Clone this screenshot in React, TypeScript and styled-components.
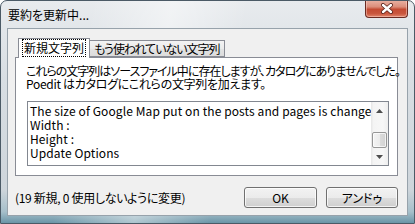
import React from 'react';
import styled, { createGlobalStyle } from 'styled-components';

const GlobalStyle = createGlobalStyle`
    html, body {
        margin: 0;
        padding: 0;
        width: 415px;
        height: 224px;
        overflow: hidden;
        background: #ffffff;
    }
    body {
        font-family: "Noto Sans CJK JP", "Noto Sans", sans-serif;
        font-size: 12px;
        color: #000000;
    }
`;

const FONT = `"Noto Sans CJK JP", "Noto Sans", sans-serif`;

const Window = styled.div`
    box-sizing: border-box;
    width: 415px;
    height: 224px;
    display: flex;
    flex-direction: column;
    border: 1px solid #4b5a66;
    border-radius: 7px 7px 0 0;
    overflow: hidden;
    background:
        linear-gradient(100deg, rgba(255, 255, 255, 0) 20%, rgba(255, 255, 255, 0.45) 38%, rgba(255, 255, 255, 0) 55%),
        linear-gradient(180deg, #e8ebee 0%, #d8dee3 35%, #ced5db 85%, #a6bfca 95%, #6a95a7 100%);
`;

const TitleBar = styled.div`
    height: 27px;
    display: flex;
    justify-content: space-between;
    align-items: flex-start;
    flex-shrink: 0;
`;

const Title = styled.span`
    font-family: ${FONT};
    font-size: 12px;
    line-height: 27px;
    padding-left: 7px;
    color: #000000;
    font-feature-settings: "palt" 1;
`;

const CloseButton = styled.div`
    width: 43px;
    height: 18px;
    margin-top: -1px;
    margin-right: 6px;
    box-sizing: border-box;
    border: 1px solid #6b2b22;
    border-top: none;
    border-radius: 0 0 4px 4px;
    background: linear-gradient(180deg, #eab3a5 0%, #dc8e7b 40%, #c44b33 55%, #c9573e 80%, #e2866c 100%);
    box-shadow: inset 0 0 0 1px rgba(255, 220, 210, 0.45);
    display: flex;
    align-items: center;
    justify-content: center;
`;

const Client = styled.div`
    flex: 1;
    margin: 0 6px 7px 6px;
    border: 1px solid #97a2ab;
    background: #f0f0f0;
    display: flex;
    flex-direction: column;
    padding: 9px 9px 7px 7px;
    min-height: 0;
`;

const TabRow = styled.div`
    display: flex;
    align-items: flex-end;
    height: 19px;
    padding-left: 3px;
`;

const Tab = styled.div<{ active?: boolean }>`
    box-sizing: border-box;
    height: ${p => (p.active ? '20px' : '17px')};
    margin-bottom: ${p => (p.active ? '-1px' : '0')};
    position: relative;
    z-index: ${p => (p.active ? 1 : 0)};
    border: 1px solid #898c95;
    border-bottom: ${p => (p.active ? 'none' : '1px solid #898c95')};
    border-left: ${p => (p.active ? '1px solid #898c95' : 'none')};
    background: ${p => (p.active ? '#ffffff' : 'linear-gradient(180deg, #f3f3f3 0%, #ebebeb 50%, #e3e3e3 51%, #dcdcdc 100%)')};
    padding: 0 4px;
    font-family: ${FONT};
    font-size: 12px;
    line-height: ${p => (p.active ? '18px' : '15px')};
    letter-spacing: ${p => (p.active ? '0' : '-1px')};
    font-feature-settings: "palt" 1;
    white-space: nowrap;
`;

const FocusLabel = styled.span`
    display: inline-block;
    outline: 1px dotted #000000;
    outline-offset: 0;
    padding: 0 1px;
    line-height: 16px;
    margin-top: 1px;
`;

const Panel = styled.div`
    box-sizing: border-box;
    height: 119px;
    border: 1px solid #898c95;
    background: #ffffff;
    padding: 6px 8px 9px 10px;
    display: flex;
    flex-direction: column;
`;

const DescLine = styled.div<{ squeeze: number }>`
    font-family: ${FONT};
    font-size: 12px;
    line-height: 13px;
    letter-spacing: ${p => p.squeeze}px;
    font-feature-settings: "palt" 1;
    white-space: nowrap;
`;

const ListBox = styled.div`
    box-sizing: border-box;
    height: 65px;
    margin-top: 11px;
    margin-left: 1px;
    border: 1px solid #828790;
    background: #ffffff;
    display: flex;
    overflow: hidden;
`;

const Items = styled.div`
    flex: 1;
    min-width: 0;
    overflow: hidden;
    padding: 2px 0 0 2px;
`;

const Item = styled.div`
    font-family: ${FONT};
    font-size: 12px;
    line-height: 14px;
    letter-spacing: 0.1px;
    white-space: nowrap;
`;

const ScrollBar = styled.div`
    width: 17px;
    flex-shrink: 0;
    display: flex;
    flex-direction: column;
    background: linear-gradient(90deg, #e6e6e6 0%, #f4f4f4 15%, #f7f7f7 70%, #eeeeee 100%);
`;

const ArrowButton = styled.div`
    height: 17px;
    display: flex;
    align-items: center;
    justify-content: center;
`;

const Track = styled.div`
    flex: 1;
    display: flex;
    flex-direction: column;
    justify-content: flex-end;
    align-items: center;
`;

const Thumb = styled.div`
    box-sizing: border-box;
    width: 15px;
    height: 16px;
    border: 1px solid #979797;
    border-radius: 2px;
    background: linear-gradient(90deg, #f4f4f4 0%, #ececec 50%, #dcdcdc 51%, #d2d2d2 100%);
    box-shadow: inset 0 0 0 1px rgba(255, 255, 255, 0.7);
`;

const Footer = styled.div`
    margin-top: 11px;
    height: 21px;
    display: flex;
    align-items: center;
`;

const Status = styled.span`
    flex: 1;
    font-family: ${FONT};
    font-size: 12px;
    letter-spacing: -0.3px;
    font-feature-settings: "palt" 1;
    white-space: nowrap;
`;

const Button = styled.div<{ w: number }>`
    box-sizing: border-box;
    width: ${p => p.w}px;
    height: 21px;
    border: 1px solid #707070;
    border-radius: 3px;
    background: linear-gradient(180deg, #f2f2f2 0%, #ebebeb 50%, #dddddd 51%, #cfcfcf 100%);
    box-shadow: inset 0 0 0 1px rgba(255, 255, 255, 0.75);
    display: flex;
    align-items: center;
    justify-content: center;
    font-family: ${FONT};
    font-size: 12px;
    font-feature-settings: "palt" 1;
    & + & {
        margin-left: 9px;
    }
`;

const Arrow = ({ up }: { up?: boolean }) => (
    <svg width="7" height="4" viewBox="0 0 7 4">
        <path d={up ? 'M0 4 L3.5 0 L7 4 Z' : 'M0 0 L3.5 4 L7 0 Z'} fill="#4d4d4d" />
    </svg>
);

const CloseGlyph = () => (
    <svg width="14" height="11" viewBox="0 0 14 11">
        <path d="M3 2 L11 9 M11 2 L3 9" stroke="#5a2118" strokeWidth="4" strokeLinecap="round" />
        <path d="M3 2 L11 9 M11 2 L3 9" stroke="#ffffff" strokeWidth="2.4" strokeLinecap="round" />
    </svg>
);

const items = [
    'The size of Google Map put on the posts and pages is change',
    'Width :',
    'Height :',
    'Update Options',
];

const App: React.FC = () => {
    return (
        <>
            <GlobalStyle />
            <Window>
                <TitleBar>
                    <Title>要約を更新中...</Title>
                    <CloseButton>
                        <CloseGlyph />
                    </CloseButton>
                </TitleBar>
                <Client>
                    <TabRow>
                        <Tab active>
                            <FocusLabel>新規文字列</FocusLabel>
                        </Tab>
                        <Tab>もう使われていない文字列</Tab>
                    </TabRow>
                    <Panel>
                        <DescLine squeeze={-1}>
                            これらの文字列はソースファイル中に存在しますが、カタログにありませんでした。
                        </DescLine>
                        <DescLine squeeze={-0.3}>Poedit はカタログにこれらの文字列を加えます。</DescLine>
                        <ListBox>
                            <Items>
                                {items.map(text => (
                                    <Item key={text}>{text}</Item>
                                ))}
                            </Items>
                            <ScrollBar>
                                <ArrowButton>
                                    <Arrow up />
                                </ArrowButton>
                                <Track>
                                    <Thumb />
                                </Track>
                                <ArrowButton>
                                    <Arrow />
                                </ArrowButton>
                            </ScrollBar>
                        </ListBox>
                    </Panel>
                    <Footer>
                        <Status>(19 新規, 0 使用しないように変更)</Status>
                        <Button w={73}>OK</Button>
                        <Button w={72}>アンドゥ</Button>
                    </Footer>
                </Client>
            </Window>
        </>
    );
};

export default App;
